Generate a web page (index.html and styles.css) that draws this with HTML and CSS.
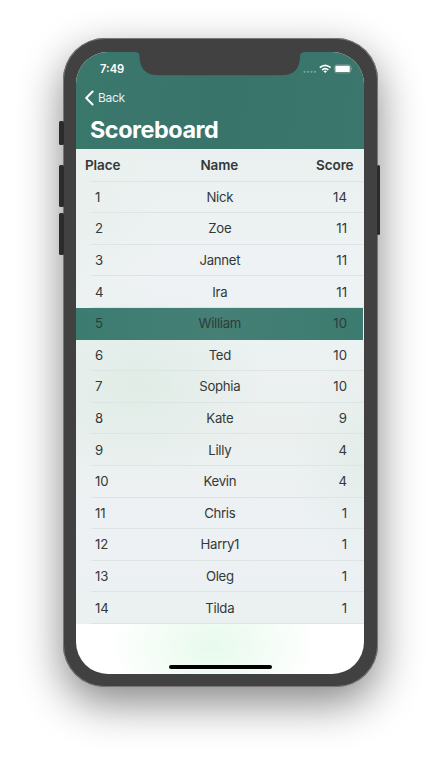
FILE: index.html
```html
<!DOCTYPE html>
<html lang="en">
<head>
<meta charset="utf-8">
<title>Scoreboard</title>
<link rel="stylesheet" href="styles.css">
</head>
<body>
<div class="phone">
  <span class="key mute"></span>
  <span class="key volume-up"></span>
  <span class="key volume-down"></span>
  <span class="key power"></span>
  <main class="screen">
    <svg class="notch" width="168" height="24" viewBox="0 0 168 24"><path d="M0 0H168V.2Q164 .2 164 4.500C164 16 158 23.200 147 23.200H21C10 23.200 3.500 16 3.500 4.500Q3.500 .2 0 .2Z" fill="#414141"/></svg>
    <header class="header">
      <div class="status">
        <span class="time">7:49</span>
        <svg class="indicators" width="50" height="12" viewBox="0 0 50 12">
          <g fill="#fff" fill-opacity=".32"><circle cx="1.500" cy="8.800" r="1.150"/><circle cx="5" cy="8.800" r="1.150"/><circle cx="8.500" cy="8.800" r="1.150"/><circle cx="12" cy="8.800" r="1.150"/></g>
          <g fill="none" stroke="#fff" stroke-width="1.600"><path d="M16.800 4.700Q22.200 -.1 27.600 4.700"/><path d="M19 7Q22.200 4.200 25.400 7"/></g>
          <path d="M20.400 8.300Q22.200 6.900 24 8.300L22.200 10.100Z" fill="#fff"/>
          <rect x="31.600" y="1.900" width="16.200" height="8" rx="2.400" fill="none" stroke="#fff" stroke-opacity=".35" stroke-width=".8"/>
          <rect x="32.400" y="2.700" width="14.400" height="6.400" rx="1.200" fill="#fff"/>
          <path d="M48.500 4.500Q49.900 5.900 48.500 7.300Z" fill="#fff" fill-opacity=".5"/>
        </svg>
      </div>
      <div class="back">
        <svg width="9" height="16" viewBox="0 0 9 16"><path d="M7.600 1.500L1.200 8L7.600 14.500" fill="none" stroke="#fff" stroke-width="2" stroke-linecap="round" stroke-linejoin="round"/></svg>
        <span>Back</span>
      </div>
      <h1>Scoreboard</h1>
    </header>
    <section class="table">
      <div class="row head"><span>Place</span><span>Name</span><span>Score</span></div>
      <div class="row"><span>1</span><span>Nick</span><span>14</span></div>
      <div class="row"><span>2</span><span>Zoe</span><span>11</span></div>
      <div class="row"><span>3</span><span>Jannet</span><span>11</span></div>
      <div class="row"><span>4</span><span>Ira</span><span>11</span></div>
      <div class="row current"><span>5</span><span>William</span><span>10</span></div>
      <div class="row"><span>6</span><span>Ted</span><span>10</span></div>
      <div class="row"><span>7</span><span>Sophia</span><span>10</span></div>
      <div class="row"><span>8</span><span>Kate</span><span>9</span></div>
      <div class="row"><span>9</span><span>Lilly</span><span>4</span></div>
      <div class="row"><span>10</span><span>Kevin</span><span>4</span></div>
      <div class="row"><span>11</span><span>Chris</span><span>1</span></div>
      <div class="row"><span>12</span><span>Harry1</span><span>1</span></div>
      <div class="row"><span>13</span><span>Oleg</span><span>1</span></div>
      <div class="row"><span>14</span><span>Tilda</span><span>1</span></div>
    </section>
    <footer class="footer"><span class="home"></span></footer>
  </main>
</div>
</body>
</html>
```
FILE: styles.css
```css
* { box-sizing: border-box; }
body {
  margin: 0;
  height: 762px;
  padding: 38px 0 0 63px;
  overflow: hidden;
  background: #fff;
  font-family: Inter, "Liberation Sans", sans-serif;
}
.phone {
  position: relative;
  width: 315px;
  height: 649px;
  padding: 14px 14px 13px 13px;
  border-radius: 42px;
  background: #414141;
  box-shadow: inset 0 0 0 1px #777, 0 16px 44px rgba(0, 0, 0, .48);
}
.key { position: absolute; background: #2b2b2b; border-radius: 1.5px; width: 5px; left: -4.5px; }
.mute { top: 83px; height: 24px; }
.volume-up { top: 127px; height: 42px; }
.volume-down { top: 175px; height: 42px; }
.power { left: 313.500px; width: 3.500px; top: 127px; height: 70px; }
.screen {
  position: relative;
  display: flex;
  flex-direction: column;
  width: 288px;
  height: 622px;
  overflow: hidden;
  border-radius: 32px;
  background: #fff;
}
.notch { position: absolute; top: 0; left: 60px; }
.header { height: 97.400px; flex: none; color: #fff; background: linear-gradient(100deg, #3b786c, #39746a 50%, #3b776c); }
.status { display: flex; justify-content: space-between; height: 34px; padding: 11px 11.500px 0 24px; }
.time { font-size: 11.200px; font-weight: 600; line-height: 13px; letter-spacing: 0; }
.indicators { display: block; }
.back { display: flex; align-items: center; gap: 4px; height: 24px; padding-left: 9px; font-size: 12px; letter-spacing: -.3px; color: #e7f0ee; }
.back span { margin-top: -1px; }
h1 { margin: 4px 0 0 14px; font-size: 23.400px; line-height: 32px; font-weight: 700; letter-spacing: -.45px; }
.table {
  flex: none;
  color: #333838;
  background:
    radial-gradient(ellipse 130px 95px at 60px 235px, #e0ece6, transparent),
    radial-gradient(ellipse 70px 110px at 288px 310px, #e4edea, transparent),
    radial-gradient(ellipse 90px 100px at 0 70px, #e9f0ed, transparent),
    linear-gradient(#eaf0ef, #eef2f4 25%, #ebf0ef 60%, #edf1f4 80%, #ebf0f1);
}
.row {
  display: grid;
  grid-template-columns: 72px 1fr 72px;
  align-items: center;
  height: 31.600px;
  padding: 0 17px 1px 19px;
  font-size: 13.200px;
  background: linear-gradient(#dde4e4, #dde4e4) 15px 100% / 100% 1px no-repeat;
}
.row span:nth-child(2) { position: relative; left: -1.200px; text-align: center; letter-spacing: -.3px; }
.row span:last-child { text-align: right; }
.head { height: 32.200px; padding: 0 10.500px 0 9px; font-size: 13.500px; font-weight: 600; letter-spacing: -.1px; }
.row.head span:nth-child(2) { left: 0; letter-spacing: -.1px; }
.current { background: linear-gradient(90deg, #3c7c70, #457f75 50%, #3c7b6f); margin-right: 1px; padding-right: 16px; color: #2c3c38; }
.footer {
  flex: 1;
  display: flex;
  justify-content: center;
  align-items: flex-end;
  padding-bottom: 5.500px;
  background: radial-gradient(ellipse 105px 70px at 137px 22px, #e7faec, transparent);
}
.home { width: 103px; height: 3.500px; border-radius: 2px; background: #000; }
```
